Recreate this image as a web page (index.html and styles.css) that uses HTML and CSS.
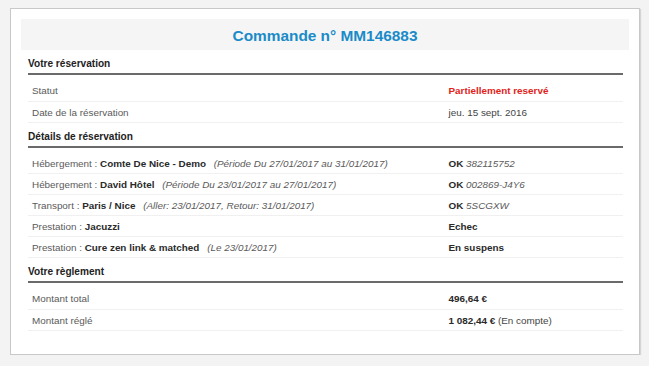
FILE: index.html
```html
<!DOCTYPE html>
<html lang="fr">
  <head>
    <meta charset="UTF-8" />
    <meta name="viewport" content="width=device-width, initial-scale=1.0" />
    <title>Commande n° MM146883</title>
    <link rel="stylesheet" href="styles.css">
  </head>
  <body>
    <div class="order">
      <h1 class="order-title">Commande n° MM146883</h1>

      <div class="order-body">
        <h2 class="section-title">Votre réservation</h2>
        <table class="info">
          <tr>
            <td class="label">Statut</td>
            <td class="value"><b class="red">Partiellement reservé</b></td>
          </tr>
          <tr>
            <td class="label">Date de la réservation</td>
            <td class="value">jeu. 15 sept. 2016</td>
          </tr>
        </table>

        <h2 class="section-title">Détails de réservation</h2>
        <table class="info">
          <tr>
            <td class="label">Hébergement : <b>Comte De Nice - Demo</b> <i class="note">(Période Du 27/01/2017 au 31/01/2017)</i></td>
            <td class="value"><b>OK</b> <i>382115752</i></td>
          </tr>
          <tr>
            <td class="label">Hébergement : <b>David Hôtel</b> <i class="note">(Période Du 23/01/2017 au 27/01/2017)</i></td>
            <td class="value"><b>OK</b> <i>002869-J4Y6</i></td>
          </tr>
          <tr>
            <td class="label">Transport : <b>Paris / Nice</b> <i class="note">(Aller: 23/01/2017, Retour: 31/01/2017)</i></td>
            <td class="value"><b>OK</b> <i>5SCGXW</i></td>
          </tr>
          <tr>
            <td class="label">Prestation : <b>Jacuzzi</b></td>
            <td class="value"><b>Echec</b></td>
          </tr>
          <tr>
            <td class="label">Prestation : <b>Cure zen link &amp; matched</b> <i class="note">(Le 23/01/2017)</i></td>
            <td class="value"><b>En suspens</b></td>
          </tr>
        </table>

        <h2 class="section-title">Votre règlement</h2>
        <table class="info">
          <tr>
            <td class="label">Montant total</td>
            <td class="value"><b>496,64 €</b></td>
          </tr>
          <tr>
            <td class="label">Montant réglé</td>
            <td class="value"><b>1 082,44 €</b> (En compte)</td>
          </tr>
        </table>
      </div>
    </div>
  </body>
</html>
```

FILE: styles.css
```css
* {
  margin: 0;
  padding: 0;
  box-sizing: border-box;
}

body {
  background-color: #f3f3f3;
  font-family: "Liberation Sans", Arial, sans-serif;
  color: #5a5a5a;
  padding: 8px 0 0 10px;
}

.order {
  width: 630px;
  background-color: #fff;
  border: 1px solid #c8c8c8;
  box-shadow: 1px 1px 1px rgba(0, 0, 0, .12);
  padding: 10px;
}

.order-title {
  height: 31px;
  line-height: 31px;
  padding-top: 1px;
  background-color: #f5f5f5;
  text-align: center;
  color: #1a8bc8;
  font-size: 15.4px;
  font-weight: 700;
}

.order-body {
  padding: 0 6px 13px 7px;
}

.section-title {
  font-size: 10.1px;
  font-weight: 700;
  color: #222;
  line-height: 14px;
  padding: 7px 0 2px;
  border-bottom: 2px solid #6a6a6a;
}

.info {
  width: 100%;
  border-collapse: collapse;
  margin-top: 5px;
  font-size: 9.9px;
}

.info td {
  height: 21px;
  padding: 1px 4px 0;
  border-bottom: 1px solid #f0f0f0;
  vertical-align: middle;
  white-space: nowrap;
}

.info .label {
  width: 70%;
}

.info b {
  color: #2a2a2a;
}

.info i {
  color: #5a5a5a;
}

.info .note {
  padding-left: 5px;
}

.info .value {
  color: #444;
}

.info .red {
  color: #e2231a;
}
```
